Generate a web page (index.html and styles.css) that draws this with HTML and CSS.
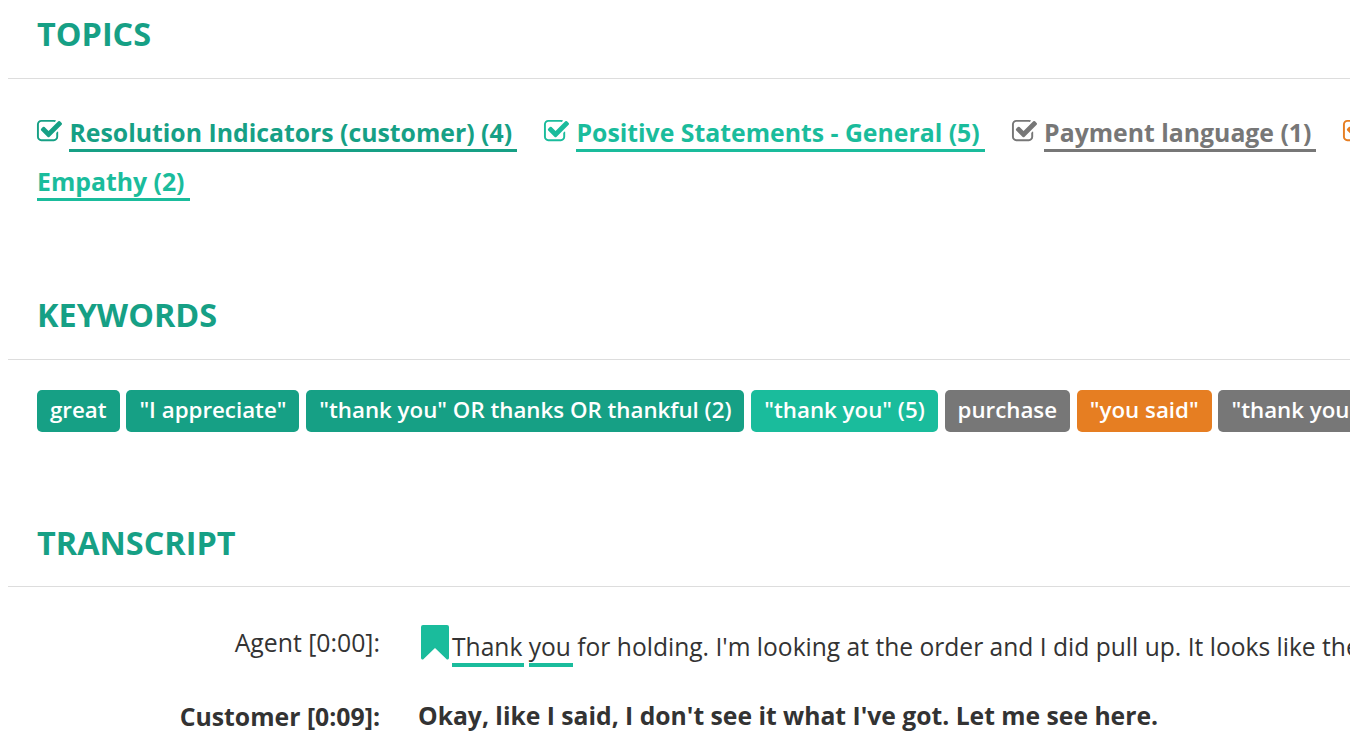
FILE: index.html
```html
<!DOCTYPE html>
<html lang="en">
<head>
<meta charset="utf-8">
<title>Call details</title>
<link rel="stylesheet" href="styles.css">
</head>
<body>
<svg class="defs" width="0" height="0" aria-hidden="true"><symbol id="check" viewBox="0 0 1792 1792"><path d="M1472 930v318q0 119-84.5 203.5t-203.5 84.5h-832q-119 0-203.5-84.5t-84.5-203.5v-832q0-119 84.5-203.5t203.5-84.5h832q63 0 117 25 15 7 18 23 3 17-9 29l-49 49q-10 10-23 10-3 0-9-2-23-6-45-6h-832q-66 0-113 47t-47 113v832q0 66 47 113t113 47h832q66 0 113-47t47-113v-254q0-13 9-22l64-64q10-10 23-10 6 0 12 3 20 8 20 29zm231-489l-814 814q-24 24-57 24t-57-24l-430-430q-24-24-24-57t24-57l110-110q24-24 57-24t57 24l263 263 647-647q24-24 57-24t57 24l110 110q24 24 24 57t-24 57z"/></symbol></svg>
<main class="page">
  <section class="section section-topics">
    <h2 class="title">TOPICS</h2>
    <div class="topics">
      <span class="topic dark"><svg class="check"><use href="#check"/></svg> <a class="topic-link">Resolution Indicators (customer) (4)</a></span>
      <span class="topic teal"><svg class="check"><use href="#check"/></svg> <a class="topic-link">Positive Statements - General (5)</a></span>
      <span class="topic gray"><svg class="check"><use href="#check"/></svg> <a class="topic-link">Payment language (1)</a></span>
      <span class="topic orange"><svg class="check"><use href="#check"/></svg></span>
      <span class="topic teal"><a class="topic-link">Empathy (2)</a></span>
    </div>
  </section>
  <section class="section section-keywords">
    <h2 class="title">KEYWORDS</h2>
    <div class="tags">
      <span class="tag tag-dark">great</span>
      <span class="tag tag-dark">"I appreciate"</span>
      <span class="tag tag-dark">"thank you" OR thanks OR thankful (2)</span>
      <span class="tag tag-teal">"thank you" (5)</span>
      <span class="tag tag-gray">purchase</span>
      <span class="tag tag-orange">"you said"</span>
      <span class="tag tag-gray">"thank you"</span>
    </div>
  </section>
  <section class="section section-transcript">
    <h2 class="title">TRANSCRIPT</h2>
    <div class="transcript">
      <div class="speaker">Agent [0:00]:</div>
      <div class="line"><svg class="bookmark" viewBox="0 0 28 35"><path d="M2 0h24a2 2 0 0 1 2 2v31a1.5 1.5 0 0 1-2.6 1L14 23 2.600 34A1.500 1.500 0 0 1 0 33V2a2 2 0 0 1 2-2z"/></svg><span class="hit">Thank</span> <span class="hit">you</span> for holding. I'm looking at the order and I did pull up. It looks like the order was placed</div>
      <div class="speaker strong">Customer [0:09]:</div>
      <div class="line strong">Okay, like I said, I don't see it what I've got. Let me see here.</div>
    </div>
  </section>
</main>
</body>
</html>
```
FILE: styles.css
```css
html, body {
  height: 100%;
  overflow: hidden;
}
body {
  margin: 0 0 0 8px;
  background: #fff;
  color: #333;
  font-family: "Open Sans", "Noto Sans", sans-serif;
}
.defs {
  display: block;
}
.page {
  width: 1400px;
}
.section-topics {
  padding-top: 11px;
}
.section-keywords {
  margin-top: 86px;
}
.section-transcript {
  margin-top: 88px;
}
.title {
  margin: 0;
  padding: 0 0 23px 29px;
  height: 44px;
  line-height: 44px;
  box-sizing: content-box;
  border-bottom: 1px solid #ddd;
  color: #16a085;
  font-size: 32.400px;
  font-weight: 700;
}
.section-transcript .title {
  padding-bottom: 22px;
}
.topics {
  padding: 29px 0 0 29px;
  line-height: 49px;
  font-size: 24.800px;
  font-weight: 700;
}
.topic {
  margin-right: 20.500px;
}
.topic-link {
  padding-right: 5px;
  border-bottom: 3px solid currentColor;
}
.check {
  width: 27px;
  height: 27px;
  margin-left: -1px;
  vertical-align: -3px;
  fill: currentColor;
}
.dark { color: #16a085; }
.teal { color: #1abc9c; }
.gray { color: #777; }
.orange { color: #e67e22; }
.tags {
  display: flex;
  gap: 6.800px;
  padding: 30px 0 0 29px;
}
.tag {
  flex: none;
  padding: 0 13px;
  height: 42px;
  line-height: 40px;
  border-radius: 5px;
  color: #fff;
  font-size: 22.300px;
  font-weight: 600;
}
.tag-dark { background: #16a085; }
.tag-teal { background: #1abc9c; }
.tag-gray { background: #777; }
.tag-orange { background: #e67e22; }
.transcript {
  display: grid;
  grid-template-columns: 372px 1fr;
  column-gap: 38px;
  row-gap: 36px;
  padding-top: 38px;
  font-size: 24.600px;
}
.speaker {
  text-align: right;
  white-space: nowrap;
  font-size: 24.800px;
}
.line {
  white-space: nowrap;
}
.strong {
  font-weight: 700;
}
.line.strong {
  font-size: 24.700px;
}
.hit {
  padding-right: 2px;
  margin-right: -2px;
  border-bottom: 4px solid #1abc9c;
}
.bookmark {
  width: 28px;
  height: 35px;
  margin: 0 3px;
  vertical-align: -4px;
  fill: #1abc9c;
}
```
